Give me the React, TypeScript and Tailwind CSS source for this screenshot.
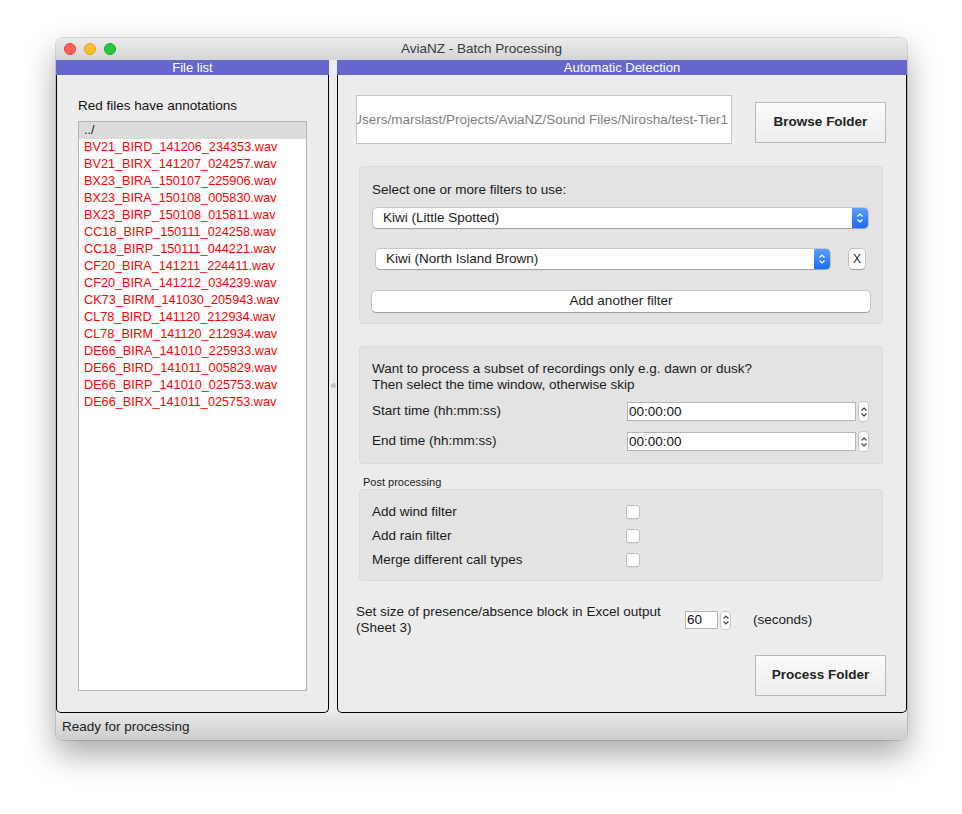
import { ReactNode } from 'react'

const files = [
	'BV21_BIRD_141206_234353.wav',
	'BV21_BIRX_141207_024257.wav',
	'BX23_BIRA_150107_225906.wav',
	'BX23_BIRA_150108_005830.wav',
	'BX23_BIRP_150108_015811.wav',
	'CC18_BIRP_150111_024258.wav',
	'CC18_BIRP_150111_044221.wav',
	'CF20_BIRA_141211_224411.wav',
	'CF20_BIRA_141212_034239.wav',
	'CK73_BIRM_141030_205943.wav',
	'CL78_BIRD_141120_212934.wav',
	'CL78_BIRM_141120_212934.wav',
	'DE66_BIRA_141010_225933.wav',
	'DE66_BIRD_141011_005829.wav',
	'DE66_BIRP_141010_025753.wav',
	'DE66_BIRX_141011_025753.wav',
]

/**
 * Hai mũi tên lên/xuống nhỏ.
 */
function Chevrons({ color }: { color: string }): ReactNode {
	return (
		<svg width="8" height="12" viewBox="0 0 8 12" fill="none" stroke={color} strokeWidth="1.2">
			<path d="M1.5 4.5 L4 2 L6.5 4.5" />
			<path d="M1.5 7.5 L4 10 L6.5 7.5" />
		</svg>
	)
}

function Spinner({ h = 'h-[21px]' }: { h?: string }): ReactNode {
	return (
		<div
			className={`${h} flex w-[11px] items-center justify-center rounded-[4px] border border-[#c8c8c8] bg-white`}
		>
			<Chevrons color="#444" />
		</div>
	)
}

function Combo({ label, className }: { label: string; className: string }): ReactNode {
	return (
		<div
			className={`flex h-[20px] items-center rounded-[4px] bg-white shadow-[0_0_0_0.5px_rgba(0,0,0,0.25),0_1px_1px_rgba(0,0,0,0.2)] ${className}`}
		>
			<span className="flex-1 pl-[10px] text-[13.5px] text-[#222]">{label}</span>
			<div className="flex h-full w-[16px] items-center justify-center rounded-r-[4px] bg-gradient-to-b from-[#5aa0fd] to-[#1a6af3]">
				<Chevrons color="#fff" />
			</div>
		</div>
	)
}

function Checkbox(): ReactNode {
	return (
		<div className="h-[14px] w-[14px] rounded-[3px] border border-[#bdbdbd] bg-white shadow-[0_1px_0_rgba(0,0,0,0.05)]" />
	)
}

function BigButton({ children }: { children: ReactNode }): ReactNode {
	return (
		<div className="flex h-[41px] w-[131px] items-center justify-center border border-[#b8b8b8] bg-gradient-to-b from-[#fbfbfb] to-[#ededed] text-[13.5px] font-bold text-[#222]">
			{children}
		</div>
	)
}

function DockHeader({ title }: { title: string }): ReactNode {
	return (
		<div className="flex h-[15px] items-center justify-center bg-[#6666cc] text-[13px] leading-none text-white">
			{title}
		</div>
	)
}

function FileListDock(): ReactNode {
	return (
		<div className="flex w-[273px] flex-col">
			<DockHeader title="File list" />
			<div className="flex flex-1 flex-col rounded-b-[5px] border border-t-0 border-black px-[21px] pb-[21px]">
				<div className="mt-[23px] mb-[7px] h-[16px] text-[13.5px] leading-[16px] text-[#111]">
					Red files have annotations
				</div>
				<div className="flex-1 border border-[#b5b5b5] bg-white">
					<div className="h-[17px] bg-[#dcdcdc] pl-[5px] text-[12.7px] leading-[17px] text-[#111]">../</div>
					{files.map((f) => (
						<div key={f} className="h-[17px] pl-[5px] text-[12.7px] leading-[17px] text-[#ff0000]">
							{f}
						</div>
					))}
				</div>
			</div>
		</div>
	)
}

function DetectionDock(): ReactNode {
	return (
		<div className="flex w-[570px] flex-col">
			<DockHeader title="Automatic Detection" />
			<div className="flex flex-1 flex-col rounded-b-[5px] border border-t-0 border-black pr-[20px] pl-[18px] text-[13.5px] text-[#1a1a1a]">
				{/* Thư mục */}
				<div className="mt-[20px] flex items-center justify-between">
					<div className="flex h-[49px] w-[376px] items-center justify-end overflow-hidden border border-[#c4c4c4] bg-white pt-[2px] pr-[3px] whitespace-nowrap text-[#808080]">
						/Users/marslast/Projects/AviaNZ/Sound Files/Nirosha/test-Tier1
					</div>
					<div className="mt-[6px]">
						<BigButton>Browse Folder</BigButton>
					</div>
				</div>

				{/* Bộ lọc */}
				<div className="mx-[3px] mt-[22px] flex h-[158px] flex-col rounded-[4px] border border-[#dadada] bg-[#e3e3e3] pr-[12px] pl-[12px]">
					<div className="mt-[15px] h-[16px] leading-[16px]">Select one or more filters to use:</div>
					<Combo label="Kiwi (Little Spotted)" className="mt-[10px] ml-[1px] mr-[2px]" />
					<div className="mt-[21px] flex items-center">
						<Combo label="Kiwi (North Island Brown)" className="ml-[4px] w-[454px]" />
						<div className="ml-[19px] flex h-[20px] w-[16px] items-center justify-center rounded-[4px] bg-white text-[12px] shadow-[0_0_0_0.5px_rgba(0,0,0,0.25),0_1px_1px_rgba(0,0,0,0.2)]">
							X
						</div>
					</div>
					<div className="mt-[22px] flex h-[21px] items-center justify-center rounded-[4px] bg-white shadow-[0_0_0_0.5px_rgba(0,0,0,0.25),0_1px_1px_rgba(0,0,0,0.2)]">
						Add another filter
					</div>
				</div>

				{/* Khoảng thời gian */}
				<div className="mx-[3px] mt-[22px] flex h-[118px] flex-col rounded-[4px] border border-[#dadada] bg-[#e3e3e3] pr-[12px] pl-[12px]">
					<div className="mt-[14px] leading-[16px]">
						Want to process a subset of recordings only e.g. dawn or dusk?
						<br />
						Then select the time window, otherwise skip
					</div>
					<div className="mt-[8px] flex h-[21px] items-center">
						<span className="w-[255px]">Start time (hh:mm:ss)</span>
						<div className="h-[19px] w-[229px] border border-[#b5b5b5] bg-white pl-[1px] leading-[17px] text-[#111]">
							00:00:00
						</div>
						<div className="ml-[2px]">
							<Spinner />
						</div>
					</div>
					<div className="mt-[9px] flex h-[21px] items-center">
						<span className="w-[255px]">End time (hh:mm:ss)</span>
						<div className="h-[19px] w-[229px] border border-[#b5b5b5] bg-white pl-[1px] leading-[17px] text-[#111]">
							00:00:00
						</div>
						<div className="ml-[2px]">
							<Spinner />
						</div>
					</div>
				</div>

				{/* Hậu xử lý */}
				<div className="mt-[11px] ml-[7px] h-[14px] text-[11px] leading-[14px]">Post processing</div>
				<div className="mx-[3px] mt-0 flex h-[92px] flex-col gap-[10px] rounded-[4px] border border-[#dadada] bg-[#e3e3e3] pt-[15px] pl-[12px]">
					{['Add wind filter', 'Add rain filter', 'Merge different call types'].map((t) => (
						<div key={t} className="flex h-[14px] items-center">
							<span className="w-[254px]">{t}</span>
							<Checkbox />
						</div>
					))}
				</div>

				{/* Kích thước khối */}
				<div className="mt-[23px] flex items-center">
					<div className="w-[329px] leading-[16px]">
						Set size of presence/absence block in Excel output
						<br />
						(Sheet 3)
					</div>
					<div className="flex items-center">
						<div className="h-[18px] w-[33px] border border-[#b5b5b5] bg-white pl-[1px] leading-[16px] text-[#111]">
							60
						</div>
						<div className="ml-[2px]">
							<Spinner h="h-[19px]" />
						</div>
						<span className="ml-[22px]">(seconds)</span>
					</div>
				</div>

				<div className="mt-[19px] flex justify-end">
					<BigButton>Process Folder</BigButton>
				</div>
			</div>
		</div>
	)
}

export default function App(): ReactNode {
	return (
		<div className="h-[814px] w-[962px] bg-white pt-[38px] pl-[56px] font-['Liberation_Sans',Arial,sans-serif]">
			<div className="flex w-[851px] flex-col overflow-hidden rounded-[6px] bg-[#ececec] shadow-[0_0_0_0.5px_rgba(0,0,0,0.25),0_14px_32px_rgba(0,0,0,0.35)]">
				{/* Thanh tiêu đề */}
				<div className="relative flex h-[22px] items-center justify-center bg-gradient-to-b from-[#ebebeb] to-[#d5d5d5] text-[13.5px] text-[#3a3a3a]">
					<div className="absolute top-[5px] left-[8px] flex gap-[8px]">
						<div className="h-[12px] w-[12px] rounded-full border border-[#e0443e] bg-[#fe5f57]" />
						<div className="h-[12px] w-[12px] rounded-full border border-[#dea123] bg-[#febc2e]" />
						<div className="h-[12px] w-[12px] rounded-full border border-[#1aab29] bg-[#28c840]" />
					</div>
					AviaNZ - Batch Processing
				</div>

				<div className="flex h-[653px]">
					<FileListDock />
					<div className="flex w-[8px] items-center justify-center">
						<div className="mt-[-2px] h-[5px] w-[5px] rounded-full bg-[#c4c4c4]" />
					</div>
					<DetectionDock />
				</div>

				{/* Thanh trạng thái */}
				<div className="flex h-[27px] items-center bg-gradient-to-b from-[#e8e8e8] to-[#cdcdcd] pt-[1px] pl-[6px] text-[13.5px] text-[#222]">
					Ready for processing
				</div>
			</div>
		</div>
	)
}
